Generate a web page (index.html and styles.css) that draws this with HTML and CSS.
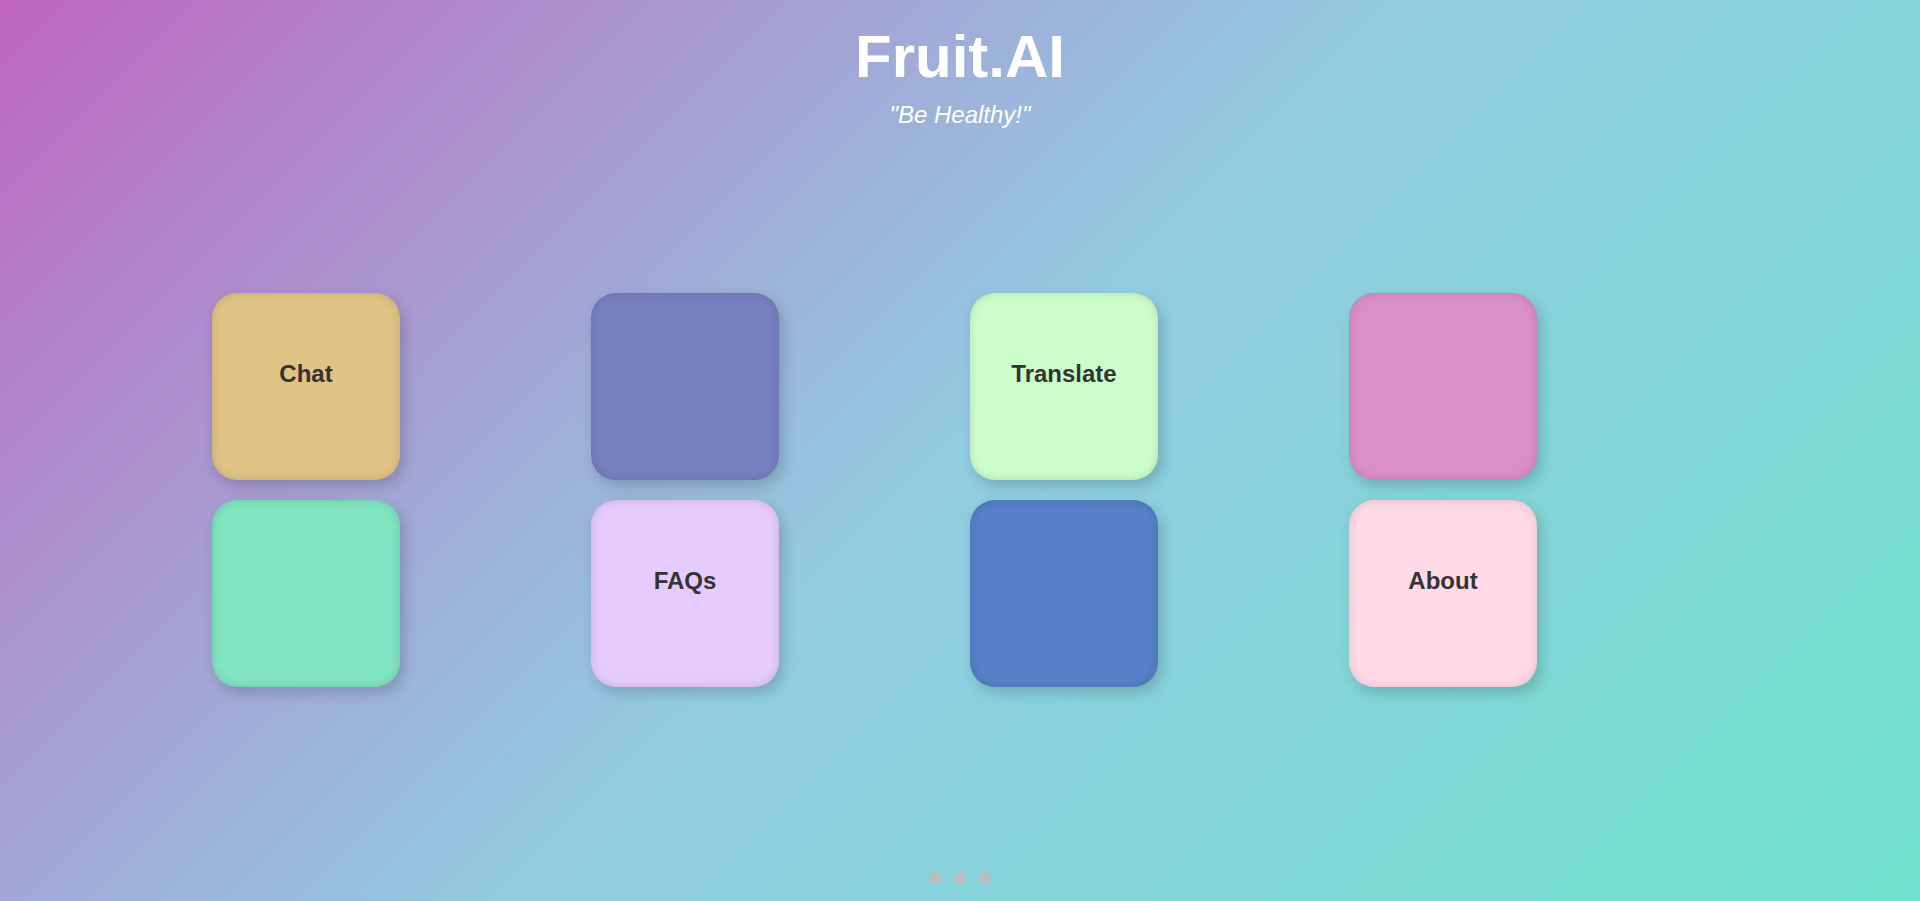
FILE: index.html
```html
<!DOCTYPE html>
<html lang="en">
<head>
<meta charset="utf-8">
<title>Fruit.AI</title>
<link rel="stylesheet" href="styles.css">
</head>
<body>
  <div class="page">
    <header class="header">
      <h1 class="title">Fruit.AI</h1>
      <p class="tagline">"Be Healthy!"</p>
    </header>
    <main class="grid">
      <div class="card card-chat"><span class="label">Chat</span></div>
      <div class="card card-violet"></div>
      <div class="card card-translate"><span class="label">Translate</span></div>
      <div class="card card-pink"></div>
      <div class="card card-mint"></div>
      <div class="card card-faqs"><span class="label">FAQs</span></div>
      <div class="card card-blue"></div>
      <div class="card card-about"><span class="label">About</span></div>
    </main>
    <div class="dots">
      <span class="dot"></span>
      <span class="dot"></span>
      <span class="dot"></span>
    </div>
  </div>
</body>
</html>
```
FILE: styles.css
```css
html, body {
  margin: 0;
  padding: 0;
}

body {
  font-family: "Liberation Sans", Arial, sans-serif;
  background: linear-gradient(135deg, #bf66c0 0%, #92cce2 50%, #70e2cc 100%);
  min-height: 100vh;
}

.page {
  min-height: 100vh;
  display: flex;
  flex-direction: column;
  box-sizing: border-box;
}

.header {
  padding-top: 22px;
  text-align: center;
  color: #ffffff;
}

.title {
  margin: 0;
  font-size: 60px;
  line-height: 69px;
  font-weight: 700;
}

.tagline {
  margin: 10px 0 0;
  font-size: 24px;
  line-height: 28px;
  font-style: italic;
}

.grid {
  margin-top: 164px;
  padding-left: 212px;
  display: grid;
  grid-template-columns: repeat(4, 188px);
  grid-auto-rows: 187px;
  column-gap: 191px;
  row-gap: 20px;
}

.card {
  border-radius: 25px;
  box-sizing: border-box;
  padding-top: 67px;
  text-align: center;
  box-shadow: 4px 6px 14px rgba(0, 0, 0, 0.18), inset 0 0 10px rgba(0, 0, 0, 0.14);
}

.label {
  display: block;
  font-size: 24px;
  line-height: 28px;
  font-weight: 700;
  color: #333333;
}

.card-chat { background: #e0c385; }
.card-violet { background: #7880c0; }
.card-translate { background: #ccfecb; }
.card-pink { background: #da8fc7; }
.card-mint { background: #80e3c1; }
.card-faqs { background: #e6cbfe; }
.card-blue { background: #5680c8; }
.card-about { background: #ffdae6; }

.dots {
  margin-top: auto;
  padding-bottom: 17px;
  display: flex;
  justify-content: center;
  gap: 13px;
}

.dot {
  width: 12px;
  height: 12px;
  border-radius: 50%;
  background: #bcbcbc;
}
```
